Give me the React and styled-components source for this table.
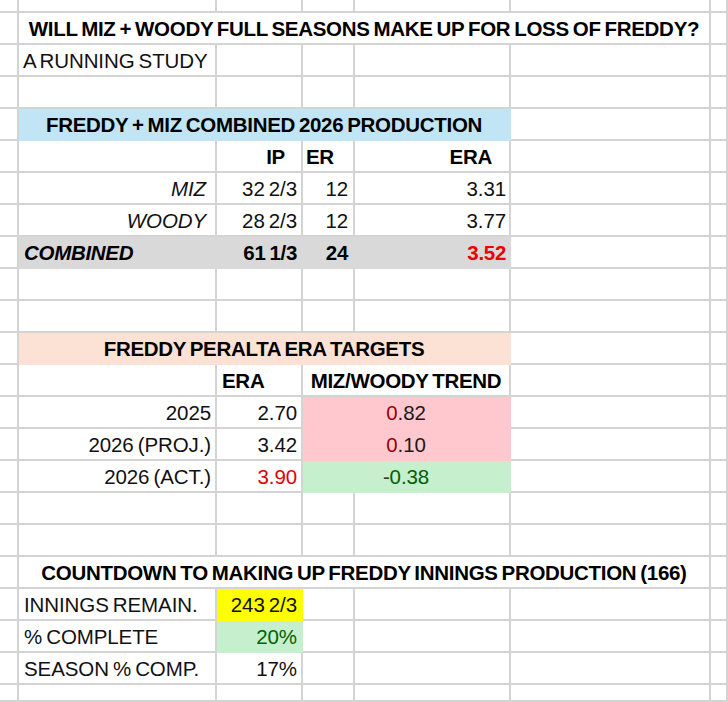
import React from "react";
import styled, { createGlobalStyle } from "styled-components";

const GlobalStyle = createGlobalStyle`
  html, body { margin: 0; padding: 0; background: #ffffff; overflow: hidden; }
  body { font-family: "Liberation Sans", Arial, sans-serif; }
`;

const LINE = "#d4d4d4";

const Sheet = styled.div`
  display: grid;
  grid-template-columns: 19px 198px 86px 52px 156px 200px 17px;
  grid-template-rows: 13px repeat(21, 32px) 17px;
  width: 728px;
  height: 702px;
  background: #ffffff;
  font-family: "Liberation Sans", Arial, sans-serif;
  font-size: 20.5px;
  color: #111111;
`;

const Cell = styled.div`
  grid-column: span ${(p) => p.$span || 1};
  box-sizing: border-box;
  display: flex;
  align-items: center;
  justify-content: ${(p) =>
    p.$align === "right" ? "flex-end" : p.$align === "center" ? "center" : "flex-start"};
  padding: 2px ${(p) => (p.$pr != null ? p.$pr : 4)}px 0 ${(p) => (p.$pl != null ? p.$pl : 4)}px;
  background: ${(p) => p.$fill || "transparent"};
  border-right: 2px solid ${(p) => p.$fill || LINE};
  border-bottom: 2px solid ${(p) => p.$fill || LINE};
  font-weight: ${(p) => (p.$bold ? 700 : 400)};
  font-style: ${(p) => (p.$italic ? "italic" : "normal")};
  color: ${(p) => p.$color || (p.$bold ? "#000000" : "#111111")};
  letter-spacing: ${(p) => (p.$bold ? "-0.3px" : "-0.1px")};
  word-spacing: -1.5px;
  white-space: nowrap;
  overflow: visible;
`;

const Tint = styled.span`
  color: ${(p) => p.$color};
`;

const BLUE = "#c1e5f5";
const PEACH = "#fbe2d5";
const GRAY = "#d9d9d9";
const PINK = "#ffc7ce";
const GREEN = "#c6efce";
const YELLOW = "#ffff00";
const RED = "#ee0000";
const DKGREEN = "#006100";
const DKRED = "#9c0006";

const E = {};

const rows = [
  [E, E, E, E, E, E, E],
  [E, { span: 5, text: "WILL MIZ + WOODY FULL SEASONS MAKE UP FOR LOSS OF FREDDY?", bold: true, align: "center" }, E],
  [E, { text: "A RUNNING STUDY" }, E, E, E, E, E],
  [E, E, E, E, E, E, E],
  [E, { span: 4, text: "FREDDY + MIZ COMBINED 2026 PRODUCTION", bold: true, align: "center", fill: BLUE }, E, E],
  [E, E, { text: "IP", bold: true, align: "right", pr: 16 }, { text: "ER", bold: true, pl: 3 }, { text: "ERA", bold: true, align: "right", pr: 17 }, E, E],
  [E, { text: "MIZ", italic: true, align: "right", pr: 9 }, { text: "32 2/3", align: "right" }, { text: "12", align: "right", pr: 5 }, { text: "3.31", align: "right", pr: 3 }, E, E],
  [E, { text: "WOODY", italic: true, align: "right", pr: 9 }, { text: "28 2/3", align: "right" }, { text: "12", align: "right", pr: 5 }, { text: "3.77", align: "right", pr: 3 }, E, E],
  [
    E,
    { text: "COMBINED", bold: true, italic: true, fill: GRAY, pl: 5 },
    { text: "61 1/3", bold: true, align: "right", fill: GRAY },
    { text: "24", bold: true, align: "right", fill: GRAY, pr: 5 },
    { text: "3.52", bold: true, align: "right", fill: GRAY, color: RED, pr: 3 },
    E,
    E,
  ],
  [E, E, E, E, E, E, E],
  [E, E, E, E, E, E, E],
  [E, { span: 4, text: "FREDDY PERALTA ERA TARGETS", bold: true, align: "center", fill: PEACH }, E, E],
  [E, E, { text: "ERA", bold: true, pl: 5 }, { span: 2, text: "MIZ/WOODY TREND", bold: true, align: "center" }, E, E],
  [
    E,
    { text: "2025", align: "right", pr: 4 },
    { text: "2.70", align: "right" },
    { span: 2, text: <><Tint $color={DKRED}>0</Tint>.82</>, align: "center", fill: PINK, color: "#1a1a1a" },
    E,
    E,
  ],
  [
    E,
    { text: "2026 (PROJ.)", align: "right", pr: 4 },
    { text: "3.42", align: "right" },
    { span: 2, text: <><Tint $color={DKRED}>0</Tint>.10</>, align: "center", fill: PINK, color: "#1a1a1a" },
    E,
    E,
  ],
  [
    E,
    { text: "2026 (ACT.)", align: "right", pr: 4 },
    { text: "3.90", align: "right", color: "#e00000" },
    { span: 2, text: <>-<Tint $color={DKGREEN}>0.38</Tint></>, align: "center", fill: GREEN, color: "#333333" },
    E,
    E,
  ],
  [E, E, E, E, E, E, E],
  [E, E, E, E, E, E, E],
  [E, { span: 5, text: "COUNTDOWN TO MAKING UP FREDDY INNINGS PRODUCTION (166)", bold: true, align: "center" }, E],
  [E, { text: "INNINGS REMAIN.", pl: 5 }, { text: "243 2/3", align: "right", fill: YELLOW }, E, E, E, E],
  [E, { text: "% COMPLETE", pl: 5 }, { text: "20%", align: "right", fill: GREEN, color: DKGREEN }, E, E, E, E],
  [E, { text: "SEASON % COMP.", pl: 5 }, { text: "17%", align: "right" }, E, E, E, E],
  [E, E, E, E, E, E, E],
];

export default function App() {
  return (
    <>
      <GlobalStyle />
      <Sheet>
        {rows.map((row, r) =>
          row.map((c, i) => (
            <Cell
              key={`${r}-${i}`}
              $span={c.span}
              $align={c.align}
              $bold={c.bold}
              $italic={c.italic}
              $fill={c.fill}
              $color={c.color}
              $pr={c.pr}
              $pl={c.pl}
            >
              {c.text}
            </Cell>
          ))
        )}
      </Sheet>
    </>
  );
}
